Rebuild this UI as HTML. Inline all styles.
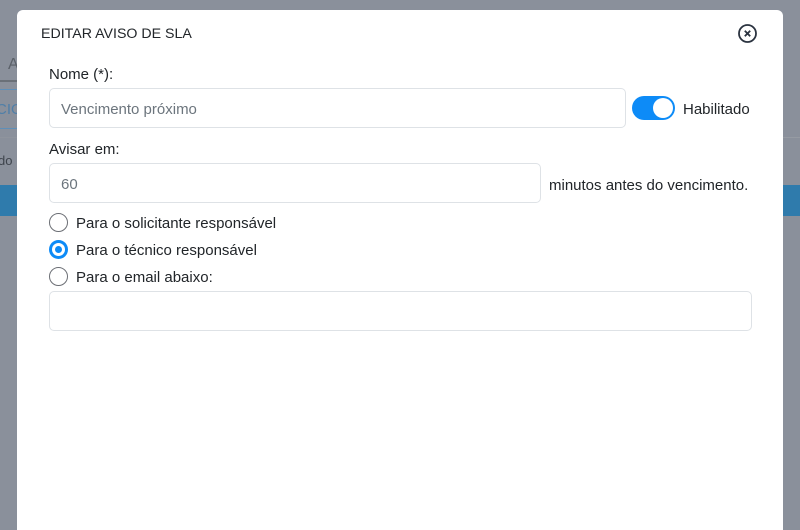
<!DOCTYPE html>
<html><head><meta charset="utf-8"><style>
*{box-sizing:border-box;margin:0;padding:0}
body{width:800px;height:520px;overflow:hidden;background:#8a909b;font-family:"Liberation Sans",sans-serif;position:relative;color:#212529}
.bg{position:absolute}
.modal{position:absolute;left:17px;top:10px;width:766px;height:520px;background:#fff;border-radius:6px 6px 0 0}
.t{position:absolute;font-size:15px;white-space:nowrap}
.m .t{margin-top:2px}
.inp{position:absolute;border:1px solid #dee2e6;border-radius:5px;background:#fff;font-size:15px;color:#6c757d;padding-left:11px;display:flex;align-items:center;padding-top:2px}
.radio{position:absolute;width:19px;height:19px;border-radius:50%;border:1.5px solid #6c6f75;background:#fff}
</style></head><body>
<div class="bg" style="left:0;top:80px;width:17px;height:2px;background:#6a7078"></div>
<div class="bg t" style="left:8px;top:56px;color:#5a6068;font-size:16px">A</div>
<div class="bg" style="left:0;top:89px;width:17px;height:40px;border-top:1px solid #5f8fb8;border-bottom:1px solid #5f8fb8"></div>
<div class="bg t" style="left:-4px;top:101px;color:#4f7fa8;font-size:15px">CIO</div>
<div class="bg" style="left:0;top:137px;width:17px;height:1px;background:#8f949d"></div>
<div class="bg t" style="left:-2px;top:153px;color:#3e444c;font-size:13px">do</div>
<div class="bg" style="left:0;top:185px;width:17px;height:31px;background:#2f7bac"></div>
<div class="bg" style="left:783px;top:137px;width:17px;height:1px;background:#969ba3"></div>
<div class="bg" style="left:783px;top:185px;width:17px;height:31px;background:#2f7bac"></div>
<div class="modal m">
<div class="t" style="left:24px;top:14px;font-size:14.2px">EDITAR AVISO DE SLA</div>
<svg style="position:absolute;left:720px;top:13px" width="21" height="21" viewBox="0 0 21 21"><circle cx="10.5" cy="10.5" r="8.5" fill="none" stroke="#2b3340" stroke-width="1.8"/><path d="M7.8 7.8L13.2 13.2M13.2 7.8L7.8 13.2" stroke="#2b3340" stroke-width="1.8"/></svg>
<div class="t" style="left:32px;top:54px">Nome (*):</div>
<div class="inp" style="left:32px;top:78px;width:577px;height:40px">Vencimento próximo</div>
<div style="position:absolute;left:615px;top:86px;width:43px;height:24px;border-radius:12px;background:#0d8bf7"></div>
<div style="position:absolute;left:636px;top:88px;width:20px;height:20px;border-radius:50%;background:#fff"></div>
<div class="t" style="left:666px;top:89px">Habilitado</div>
<div class="t" style="left:32px;top:129px">Avisar em:</div>
<div class="inp" style="left:32px;top:153px;width:492px;height:40px">60</div>
<div class="t" style="left:532px;top:165px">minutos antes do vencimento.</div>
<div class="radio" style="left:32px;top:203px"></div>
<div class="t" style="left:59px;top:203px">Para o solicitante responsável</div>
<div class="radio" style="left:32px;top:230px;border:none;background:#0d8bf7"><div style="position:absolute;left:3px;top:3px;width:13px;height:13px;border-radius:50%;border:3px solid #fff;background:#0d8bf7"></div></div>
<div class="t" style="left:59px;top:230px">Para o técnico responsável</div>
<div class="radio" style="left:32px;top:257px"></div>
<div class="t" style="left:59px;top:257px">Para o email abaixo:</div>
<div class="inp" style="left:32px;top:281px;width:703px;height:40px"></div>
</div>
</body></html>
